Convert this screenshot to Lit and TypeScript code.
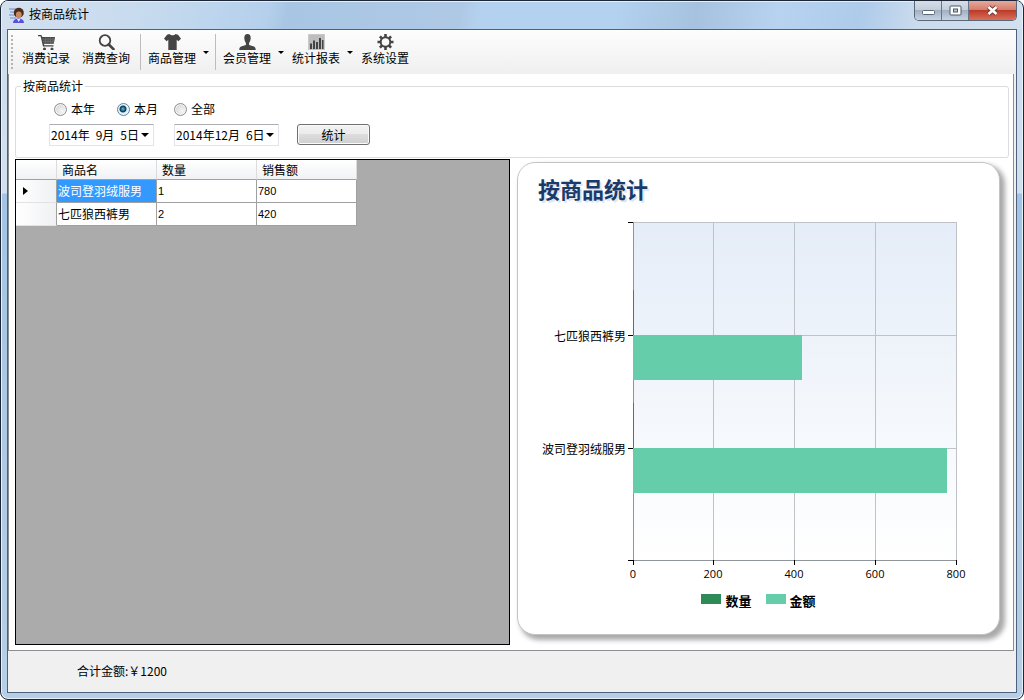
import { LitElement, html, svg, css } from "lit";
import { customElement, state } from "lit/decorators.js";

interface Row {
  name: string;
  count: number;
  amount: number;
}

const ROWS: Row[] = [
  { name: "波司登羽绒服男", count: 1, amount: 780 },
  { name: "七匹狼西裤男", count: 2, amount: 420 },
];

const ICONS = {
  cart: svg`<path d="M0 1h3.4l.9 2H17l-1.300 6.800H6L6.300 11.200H15.500v1.300H5L2.600 2.300H0z" fill="#444"/>
    <path d="M4 4.500h12.500l-1 5H5.500z" fill="#555"/>
    <path d="M4.500 5h12M5 7.500h11.500M7.500 3v7M10 3v7M12.500 3v7M15 3v7" stroke="#777" stroke-width=".5"/>
    <circle cx="6.500" cy="15" r="1.500" fill="#444"/><circle cx="14" cy="15" r="1.500" fill="#444"/>`,
  search: svg`<circle cx="7" cy="6.500" r="5.300" fill="none" stroke="#444" stroke-width="1.800"/>
    <path d="M10.800 10.500l4.700 4.700" stroke="#444" stroke-width="2.600" stroke-linecap="round"/>`,
  shirt: svg`<path d="M5.500 0C6.500 1.700 10.500 1.700 11.500 0L14 .8 17 4.800 14.300 7.200 12.700 5.700V16H4.300V5.700L2.700 7.200 0 4.800 3 .8z" fill="#444"/>`,
  user: svg`<path d="M8.500 0c2.300 0 3.400 1.700 3.200 4.300-.2 2.200-.8 3.700-1.600 4.700v1.900l4.800 1.700c1.300.5 1.800 1.400 1.800 3.400H.3c0-2 .5-2.900 1.800-3.400l4.800-1.700V9C6.100 8 5.500 6.500 5.300 4.300 5.100 1.700 6.200 0 8.500 0z" fill="#444"/>`,
  chart: svg`<path d="M.5.5h16v15.500H.5z" fill="#bdbdbd" stroke="#c9c9c9"/>
    <path d="M2 9.500h2V15H2zM5 6.500h2V15H5zM8 8h2v7H8zM11 4h2v11h-2zM14 6h1.500v9H14z" fill="#444"/>`,
  gear: svg`<circle cx="8.500" cy="8" r="4.800" fill="none" stroke="#444" stroke-width="2"/>
    <path d="M8.500 0v3M8.500 13v3M.5 8h3M13.500 8h3M2.900 2.400l2.100 2.100M12 11.500l2.100 2.100M14.100 2.400L12 4.500M5 11.500l-2.100 2.100" stroke="#444" stroke-width="2.600"/>`,
};

@customElement("stat-chart")
export class StatChart extends LitElement {
  static styles = css`
    :host {
      display: flex;
      flex-direction: column;
      box-sizing: border-box;
      padding-top: 9px;
      border: 1px solid #c4c4c4;
      border-radius: 18px;
      background: #fff;
      box-shadow: 4px 4px 5px 1px rgba(0, 0, 0, 0.34);
    }
    .title {
      margin: 0;
      padding: 0 0 2px 20px;
      font-size: 22px;
      font-weight: 700;
      line-height: 32px;
      color: #1a3b69;
      text-shadow: 2px 2px 1px #dde5f1;
    }
    .plot {
      display: block;
      width: 100%;
      font-size: 12px;
    }
    .tick {
      font-family: "Open Sans", sans-serif;
      font-size: 11px;
    }
    .legend {
      display: flex;
      justify-content: center;
      gap: 14px;
      margin-top: 8px;
      font-size: 13px;
      font-weight: 700;
      line-height: 18px;
    }
    .key {
      display: flex;
      gap: 4px;
    }
    .swatch {
      width: 20px;
      height: 10px;
      margin-top: 2px;
      background: #2e8b57;
    }
    .amount {
      background: #66cdaa;
    }
  `;

  render() {
    const left = 115;
    const top = 16;
    const width = 323;
    const height = 338;
    const max = 800;
    const ticks = [0, 200, 400, 600, 800];
    const x = (v: number) => Math.floor((v / max) * width) + left;
    const ys = [129, 242];
    const rows = [...ROWS].reverse();
    return html`
      <h2 class="title">按商品统计</h2>
      <svg class="plot" viewBox="0 0 481 378" role="img" aria-label="按商品统计">
        <defs>
          <linearGradient id="back" x1="0" y1="0" x2="0" y2="1">
            <stop offset="0" stop-color="#e5edf8" />
            <stop offset="1" stop-color="#fff" />
          </linearGradient>
        </defs>
        <rect x=${left} y=${top} width=${width} height=${height} fill="url(#back)" />
        <g stroke="#bfc3c8" shape-rendering="crispEdges">
          ${ticks.map((t) => svg`<path d="M${x(t)}.5 ${top}V${top + height}" />`)}
          ${[top, ...ys].map((y) => svg`<path d="M${left} ${y}.5H${left + width}" />`)}
          <path d="M${left} ${top + height}.5H${left + width + 1}M${left}.5 ${top}V${top + height}" stroke="#8f9499" />
        </g>
        ${rows.map(
          (r, i) => svg`
            <rect x=${left} y=${ys[i] - 45} width=${Math.max(1, x(r.count) - left)} height="45" fill="#2e8b57" />
            <rect x=${left} y=${ys[i]} width=${x(r.amount) - left} height="45" fill="#66cdaa" />
            <text x=${left - 7} y=${ys[i] + 6} text-anchor="end">${r.name}</text>`,
        )}
        <g stroke="#000" shape-rendering="crispEdges">
          ${[top, ...ys, top + height].map((y) => svg`<path d="M${left - 5} ${y}.5h5" />`)}
          ${ticks.map((t) => svg`<path d="M${x(t)}.5 ${top + height}v5" />`)}
        </g>
        ${ticks.map(
          (t) => svg`<text class="tick" x=${x(t)} y="372" text-anchor="middle">${t}</text>`,
        )}
      </svg>
      <div class="legend">
        <span class="key"><span class="swatch"></span>数量</span>
        <span class="key"><span class="swatch amount"></span>金额</span>
      </div>
    `;
  }
}

@customElement("app-root")
export class AppRoot extends LitElement {
  @state() private range = "本月";
  @state() private selected = 0;

  static styles = css`
    :host {
      display: block;
      height: 100vh;
      background: #fff;
      color: #000;
      font: 12px/16px "Noto Sans CJK SC", sans-serif;
    }
    * {
      box-sizing: border-box;
    }
    button,
    select,
    input {
      margin: 0;
      font: inherit;
      color: inherit;
    }
    .window {
      display: flex;
      flex-direction: column;
      height: 100%;
      padding: 0 6px 6px;
      border: 1px solid #1c2637;
      border-radius: 8px;
      background: linear-gradient(#ccdcec 0, #d2e0ee 192px, #a3c4e4 193px, #b7cfe6 100%);
      box-shadow: inset 0 0 0 1px #e6f1fb;
      overflow: hidden;
    }
    .titlebar {
      display: flex;
      align-items: flex-start;
      height: 28px;
      flex: none;
      margin: 0 -5px;
      padding: 0 5px 0 7px;
      border-top: 1px solid #e8eef8;
      background: linear-gradient(
        100deg,
        #d3e0ee 0,
        #c7dbef 14%,
        #b5d0ec 26%,
        #a8c6e4 28%,
        #afc9e5 45%,
        #b4d2f0 47%,
        #b3d2f0 60%,
        #a6c2df 68%,
        #b7d3f0 76%,
        #aecbea 84%,
        #ccdced 90%,
        #d2e0ef 100%
      );
    }
    .logo {
      width: 16px;
      height: 16px;
      margin: 5px 4px 0 0;
    }
    .caption {
      flex: 1;
      margin: 4px 0 0;
      font-size: 12px;
      font-weight: 400;
      line-height: 16px;
    }
    .controls {
      display: flex;
      margin-top: -1px;
      border: 1px solid #59677a;
      border-top: 0;
      border-radius: 0 0 5px 5px;
      overflow: hidden;
    }
    .control {
      display: flex;
      align-items: center;
      justify-content: center;
      width: 27px;
      height: 19px;
      padding: 0;
      border: 0;
      border-right: 1px solid #66758a;
      background: linear-gradient(#d5dde8 0, #c3cedb 46%, #a2b0c2 50%, #c5d3e2 100%);
    }
    .close {
      width: 47px;
      border-right: 0;
      background: linear-gradient(#e6a99c 0, #d67c6c 46%, #bb3b29 50%, #d9705a 100%);
    }
    .client {
      display: flex;
      flex: 1;
      flex-direction: column;
      min-height: 0;
      border: 1px solid #4b617c;
      background: #f0f0f0;
    }
    .toolbar {
      display: flex;
      height: 44px;
      flex: none;
      padding: 3px 0 4px 3px;
      background: linear-gradient(#fdfdfd, #f6f6f6 50%, #efefef);
    }
    .grip {
      width: 2px;
      margin: 2px 3px 1px 0;
      background: repeating-linear-gradient(#b4b4b4 0 2px, transparent 2px 4px);
    }
    .tool {
      display: flex;
      padding: 0;
      border: 0;
      background: none;
    }
    .face {
      display: flex;
      flex-direction: column;
      align-items: center;
      width: 60px;
    }
    .icon {
      width: 17px;
      height: 16px;
      margin-top: 1px;
    }
    .arrow {
      width: 9px;
      height: 16px;
      margin-top: 12px;
    }
    .rule {
      width: 1px;
      margin: 1px 1px 0 4px;
      background: #bdbdbd;
    }
    .content {
      display: flex;
      flex: 1;
      flex-direction: column;
      min-height: 0;
      margin-right: 2px;
      padding: 4px 4px 5px 6px;
      border: 1px solid #8b8f94;
      border-top: 0;
      background: #fff;
    }
    .group {
      min-width: 0;
      margin: 0 0 1px;
      padding: 6px 5px 11px;
      border: 1px solid #dcdcdc;
      border-radius: 3px;
    }
    .heading {
      padding: 0 2px;
    }
    .radios {
      display: grid;
      grid-template-columns: 63px 57px auto;
      justify-content: start;
      padding-left: 33px;
      margin-bottom: 6px;
    }
    .choice {
      display: flex;
      align-items: center;
      gap: 4px;
      height: 18px;
    }
    .radio {
      appearance: none;
      width: 13px;
      height: 13px;
      border: 1px solid #8e8f8f;
      border-radius: 50%;
      background: radial-gradient(circle at 65% 65%, #f6f6f6, #c9cdd1);
      box-shadow: inset 0 0 0 1px #f4f4f4;
    }
    .radio:checked {
      border-color: #5586a3;
      background: radial-gradient(circle at 45% 45%, #6fc6de 0, #1b6282 2px, #0d3953 3px, #e2eef4 4px);
    }
    .period {
      display: grid;
      grid-template-columns: 125px 123px 73px;
      padding-left: 28px;
    }
    .date {
      appearance: none;
      width: 105px;
      height: 22px;
      padding: 0 1px;
      border: 1px solid #e2e3ea;
      border-top-color: #abadb3;
      border-radius: 1px;
      background: #fff
        url("data:image/svg+xml,%3Csvg xmlns='http://www.w3.org/2000/svg' width='8' height='4'%3E%3Cpath d='M0 0h8L4 4z'/%3E%3C/svg%3E")
        no-repeat right 4px center;
    }
    .run {
      height: 21px;
      padding: 0;
      border: 1px solid #707070;
      border-radius: 3px;
      background: linear-gradient(#f3f3f3 0, #ebebeb 49%, #dddddd 50%, #cfcfcf 100%);
      box-shadow: inset 0 0 0 1px #fafafa;
      line-height: 17px;
    }
    .data {
      display: grid;
      flex: 1;
      grid-template-columns: 495fr 483fr;
      gap: 7px;
      min-height: 0;
      padding-right: 9px;
    }
    .gridview {
      border: 1px solid #000;
      background: #ababab;
      overflow: auto;
    }
    .table {
      width: 341px;
      border-spacing: 0;
      table-layout: fixed;
      background: #fff;
    }
    .stub {
      width: 41px;
    }
    .table th,
    .table td {
      height: 23px;
      padding: 0 1px;
      border: solid #a0a0a0;
      border-width: 0 1px 1px 0;
      text-align: left;
      font-weight: 400;
      line-height: 16px;
      white-space: nowrap;
    }
    .table .head {
      height: 20px;
      padding: 0 5px;
      border-right-color: #dcdcdc;
      background: linear-gradient(#fff, #f1f2f4);
    }
    .table .mark {
      padding: 0 7px;
      border-bottom-color: #e2e2e2;
      background: linear-gradient(90deg, #fff, #f0f1f3);
    }
    .marker {
      display: block;
      width: 5px;
      height: 8px;
    }
    .table .number {
      font-family: "Liberation Sans", sans-serif;
      font-size: 11px;
    }
    .table .picked {
      background: #3399ff;
      color: #fff;
    }
    .chart {
      margin: 3px 0 10px;
    }
    .status {
      flex: none;
      height: 41px;
      padding: 12px 69px;
    }
  `;

  private tool(label: string, icon: unknown, menu = false) {
    return html`<button class="tool" type="button">
      <span class="face">
        <svg class="icon" viewBox="0 0 17 16">${icon}</svg>
        <span>${label}</span>
      </span>
      ${menu
        ? html`<svg class="arrow" viewBox="0 0 9 16"><path d="M1 6h6L4 9z" /></svg>`
        : ""}
    </button>`;
  }

  render() {
    return html`
      <div class="window">
        <header class="titlebar">
          <svg class="logo" viewBox="0 0 16 16">
            <path d="M0 2h7M1 5h6M0 8h6M1 11h6" stroke="#8fa6d8" stroke-width="1.500" />
            <path d="M4 16c0-3 2-4.500 5.500-4.500S15 13 15 16z" fill="#5a50e0" />
            <path d="M8 12l1.700 3 1.800-3z" fill="#e8ecff" />
            <circle cx="9.800" cy="5.800" r="5" fill="#4d2b1c" />
            <ellipse cx="9.800" cy="7.800" rx="2.900" ry="3.400" fill="#c98a5f" />
          </svg>
          <h1 class="caption">按商品统计</h1>
          <div class="controls">
            <button class="control" type="button" aria-label="最小化">
              <svg width="13" height="13" viewBox="0 0 13 13">
                <rect x=".5" y="6.500" width="12" height="4" rx="1" fill="#fff" stroke="#5a6779" />
              </svg>
            </button>
            <button class="control" type="button" aria-label="最大化">
              <svg width="13" height="13" viewBox="0 0 13 13">
                <rect x="1" y="2" width="11" height="9" rx="1" fill="#fff" stroke="#4d5868" />
                <rect x="4.500" y="5" width="4" height="3" fill="#bcc8d6" stroke="#4d5868" />
              </svg>
            </button>
            <button class="control close" type="button" aria-label="关闭">
              <svg width="13" height="13" viewBox="0 0 13 13">
                <path d="M2.500 3l8 7M10.500 3l-8 7" stroke="#6b3a3a" stroke-width="4.400" />
                <path d="M2.500 3l8 7M10.500 3l-8 7" stroke="#fff" stroke-width="2.600" />
              </svg>
            </button>
          </div>
        </header>

        <main class="client">
          <nav class="toolbar">
            <span class="grip"></span>
            ${this.tool("消费记录", ICONS.cart)} ${this.tool("消费查询", ICONS.search)}
            <span class="rule"></span>
            ${this.tool("商品管理", ICONS.shirt, true)}
            <span class="rule"></span>
            ${this.tool("会员管理", ICONS.user, true)} ${this.tool("统计报表", ICONS.chart, true)}
            ${this.tool("系统设置", ICONS.gear)}
          </nav>

          <section class="content">
            <fieldset class="group">
              <legend class="heading">按商品统计</legend>
              <div class="radios">
                ${["本年", "本月", "全部"].map(
                  (name) => html`<label class="choice">
                    <input
                      class="radio"
                      type="radio"
                      name="range"
                      .checked=${this.range === name}
                      @change=${() => (this.range = name)}
                    />${name}
                  </label>`,
                )}
              </div>
              <div class="period">
                <select class="date" aria-label="开始日期">
                  <option>2014年\u20029月\u20025日</option>
                </select>
                <select class="date" aria-label="结束日期">
                  <option>2014年12月\u20026日</option>
                </select>
                <button class="run" type="button">统计</button>
              </div>
            </fieldset>

            <div class="data">
              <div class="gridview">
                <table class="table">
                  <colgroup>
                    <col class="stub" />
                    <col />
                    <col />
                    <col />
                  </colgroup>
                  <thead>
                    <tr>
                      <th class="head"></th>
                      <th class="head">商品名</th>
                      <th class="head">数量</th>
                      <th class="head">销售额</th>
                    </tr>
                  </thead>
                  <tbody>
                    ${ROWS.map(
                      (r, i) => html`<tr @click=${() => (this.selected = i)}>
                        <th class="mark">
                          ${i === this.selected
                            ? html`<svg class="marker" viewBox="0 0 5 8"><path d="M0 0l5 4-5 4z" /></svg>`
                            : ""}
                        </th>
                        <td class=${i === this.selected ? "picked" : ""}>${r.name}</td>
                        <td class="number">${r.count}</td>
                        <td class="number">${r.amount}</td>
                      </tr>`,
                    )}
                  </tbody>
                </table>
              </div>
              <stat-chart class="chart"></stat-chart>
            </div>
          </section>

          <footer class="status">合计金额:￥1200</footer>
        </main>
      </div>
    `;
  }
}
